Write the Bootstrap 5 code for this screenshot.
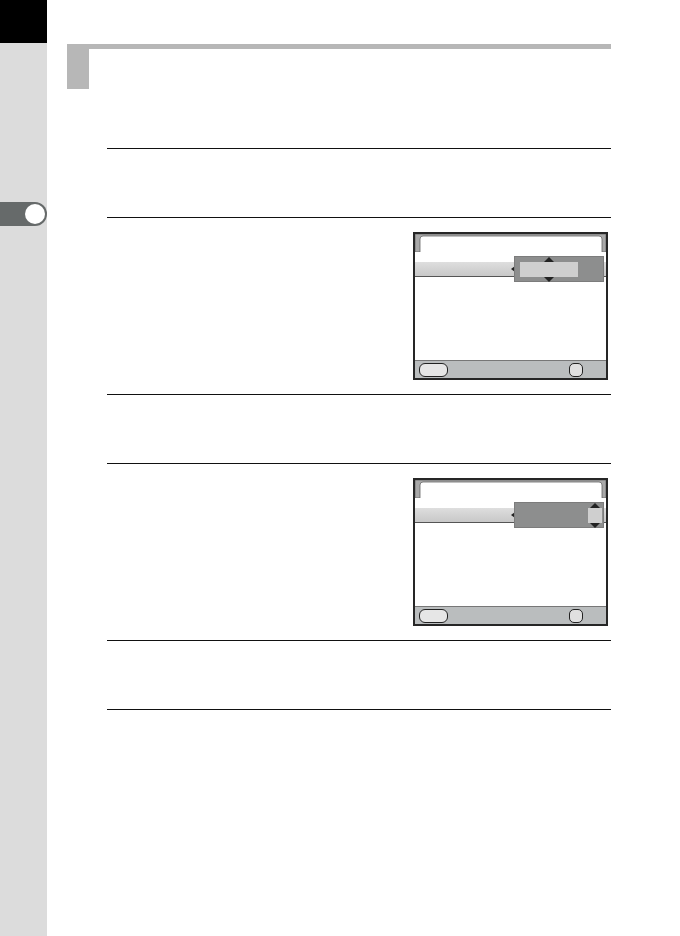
<!DOCTYPE html>
<html lang="en">
<head>
<meta charset="utf-8">
<title>Manual page</title>
<link rel="stylesheet" href="https://cdn.jsdelivr.net/npm/bootstrap@5.3.0/dist/css/bootstrap.min.css">
<style>
body{background:#fff;margin:0;font-family:"Liberation Sans",sans-serif}
.page-wrap{width:680px;height:936px;overflow:hidden}
.side-strip{width:47px;height:936px;background:#dcdcdc;flex:none}
.side-black{height:43px;background:#000}
.side-tab{margin-top:159px;height:24px;background:#666a6a;border-radius:0 12px 12px 0}
.side-dot{width:20px;height:20px;background:#fff;border-radius:50%;margin-right:2px}
.main-col{width:544px;margin-left:20px;padding-top:44px}
.head-block{height:45px}
.head-bar{height:5px;background:#b7b7b7}
.head-square{width:22px;height:40px;background:#b7b7b7}
.step-list{margin:59px 0 0 40px}
.step-short,.step-tall{border-top:1px solid #111}
.step-short{height:69px}
.step-tall{height:177px;padding:14px 3px 0 0}
.step-last{height:70px;border-bottom:1px solid #111}
.cam-screen{width:195px;height:148px;border:2px solid #262626;background:#fff;position:relative}
.cam-tab{position:absolute;left:0;top:0}
.cam-row{margin-top:28px;height:15px;background:linear-gradient(#dedede,#c8c8c8);border-bottom:1px solid #555}
.cam-foot{height:18px;background:#babdbe;border-top:1px solid #777;padding:2px 4px 0}
.cam-pill{width:29px;height:14px;background:#e6e6e6;border:1px solid #222;border-radius:6px}
.cam-key{width:14px;height:14px;background:#e0e0e0;border:1px solid #222;border-radius:5px;margin-right:19px}
.cam-pop{position:absolute;left:99px;top:22px;width:90px;height:26px;background:#8d8e8e;border:1px solid #7c7c7c}
.cam-val{position:absolute;top:5px;height:15px;background:#cfcfcf}
.val-wide{left:5px;width:58px}
.val-narrow{left:73px;width:14px}
.cam-arrow{position:absolute;width:10px;height:5px}
.arrow-wide{left:29px}
.arrow-narrow{left:75px}
.arrow-up{top:0}
.arrow-down{top:20px}
.cam-left{position:absolute;left:96px;top:32px;width:4px;height:6px}
</style>
</head>
<body>
<div class="page-wrap d-flex">
  <div class="side-strip">
    <div class="side-black"></div>
    <div class="side-tab d-flex align-items-center justify-content-end"><div class="side-dot"></div></div>
  </div>
  <div class="main-col">
    <div class="head-block">
      <div class="head-bar"></div>
      <div class="head-square"></div>
    </div>
    <div class="step-list">
      <div class="step-short"></div>
      <div class="step-tall d-flex justify-content-end">
        <div class="cam-screen d-flex flex-column">
          <svg class="cam-tab" width="191" height="18" viewBox="0 0 191 18"><path d="M0 0H191V18H187V5Q187 2 184 2H8Q5 2 5 5V18H0Z" fill="#a9a9a9" stroke="#666" stroke-width=".8"/></svg>
          <div class="cam-row"></div>
          <svg class="cam-left" viewBox="0 0 4 6"><path d="M4 0V6L0 3Z" fill="#222"/></svg>
          <div class="cam-pop">
            <div class="cam-val val-wide"></div>
            <svg class="cam-arrow arrow-wide arrow-up" viewBox="0 0 10 5"><path d="M5 0L10 5H0Z" fill="#222"/></svg>
            <svg class="cam-arrow arrow-wide arrow-down" viewBox="0 0 10 5"><path d="M0 0H10L5 5Z" fill="#222"/></svg>
          </div>
          <div class="cam-foot mt-auto d-flex justify-content-between">
            <div class="cam-pill"></div>
            <div class="cam-key"></div>
          </div>
        </div>
      </div>
      <div class="step-short"></div>
      <div class="step-tall d-flex justify-content-end">
        <div class="cam-screen d-flex flex-column">
          <svg class="cam-tab" width="191" height="18" viewBox="0 0 191 18"><path d="M0 0H191V18H187V5Q187 2 184 2H8Q5 2 5 5V18H0Z" fill="#a9a9a9" stroke="#666" stroke-width=".8"/></svg>
          <div class="cam-row"></div>
          <svg class="cam-left" viewBox="0 0 4 6"><path d="M4 0V6L0 3Z" fill="#222"/></svg>
          <div class="cam-pop">
            <div class="cam-val val-narrow"></div>
            <svg class="cam-arrow arrow-narrow arrow-up" viewBox="0 0 10 5"><path d="M5 0L10 5H0Z" fill="#222"/></svg>
            <svg class="cam-arrow arrow-narrow arrow-down" viewBox="0 0 10 5"><path d="M0 0H10L5 5Z" fill="#222"/></svg>
          </div>
          <div class="cam-foot mt-auto d-flex justify-content-between">
            <div class="cam-pill"></div>
            <div class="cam-key"></div>
          </div>
        </div>
      </div>
      <div class="step-short step-last"></div>
    </div>
  </div>
</div>
<script src="https://cdn.jsdelivr.net/npm/bootstrap@5.3.0/dist/js/bootstrap.bundle.min.js"></script>
</body>
</html>
